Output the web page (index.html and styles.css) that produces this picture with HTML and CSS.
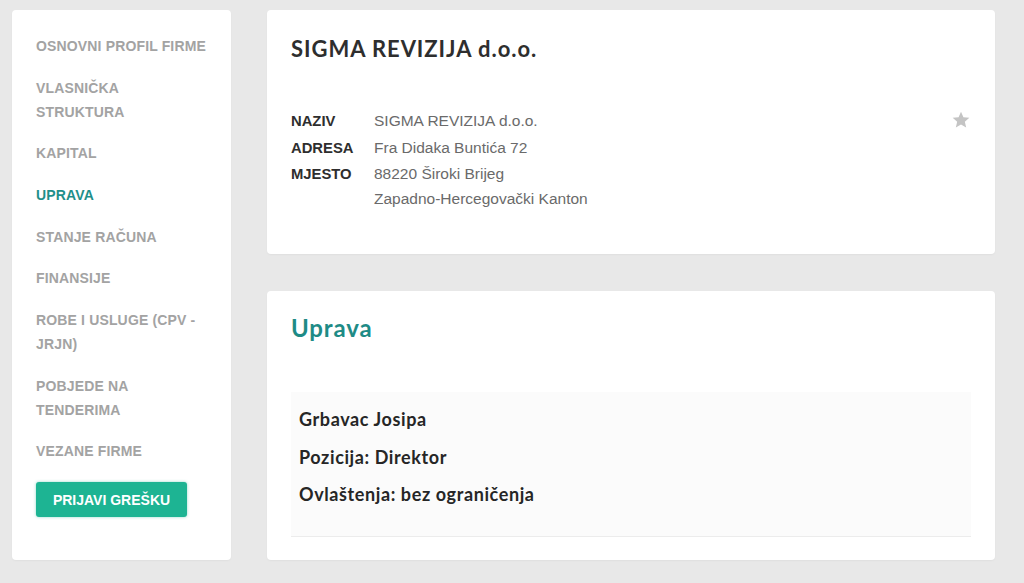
FILE: index.html
```html
<!DOCTYPE html>
<html lang="hr">
<head>
<meta charset="utf-8">
<title>SIGMA REVIZIJA d.o.o.</title>
<link rel="stylesheet" href="styles.css">
</head>
<body>
<div class="page">
  <aside class="sidebar">
    <nav class="menu">
      <a class="menu-item">OSNOVNI PROFIL FIRME</a>
      <a class="menu-item">VLASNIČKA STRUKTURA</a>
      <a class="menu-item">KAPITAL</a>
      <a class="menu-item active">UPRAVA</a>
      <a class="menu-item">STANJE RAČUNA</a>
      <a class="menu-item">FINANSIJE</a>
      <a class="menu-item">ROBE I USLUGE (CPV - JRJN)</a>
      <a class="menu-item">POBJEDE NA TENDERIMA</a>
      <a class="menu-item">VEZANE FIRME</a>
    </nav>
    <button class="report-btn">PRIJAVI GREŠKU</button>
  </aside>
  <main class="main">
    <section class="card profile">
      <h1 class="company-title">SIGMA REVIZIJA d.o.o.</h1>
      <div class="info-row">
        <dl class="info">
          <dt>NAZIV</dt><dd>SIGMA REVIZIJA d.o.o.</dd>
          <dt>ADRESA</dt><dd>Fra Didaka Buntića 72</dd>
          <dt>MJESTO</dt><dd>88220 Široki Brijeg<br>Zapadno-Hercegovački Kanton</dd>
        </dl>
        <svg class="star" viewBox="0 0 24 24" width="20" height="20" aria-hidden="true">
          <path d="M12 2.2l2.9 6.6 7.1.6-5.4 4.7 1.6 7-6.2-3.7-6.2 3.7 1.6-7L2 9.4l7.1-.6z" fill="#c4c4c4"/>
        </svg>
      </div>
    </section>
    <section class="card management">
      <h2 class="section-title">Uprava</h2>
      <div class="person">
        <p>Grbavac Josipa</p>
        <p>Pozicija: Direktor</p>
        <p>Ovlaštenja: bez ograničenja</p>
      </div>
    </section>
  </main>
</div>
</body>
</html>
```

FILE: styles.css
```css
* { box-sizing: border-box; }
html, body { margin: 0; padding: 0; }
body {
  background: #e8e8e8;
  font-family: "Liberation Sans", Arial, sans-serif;
  width: 1024px;
  height: 583px;
  overflow: hidden;
}
.page {
  display: flex;
  align-items: flex-start;
  gap: 36px;
  padding: 10px 29px 0 12px;
}
.sidebar {
  width: 219px;
  height: 550px;
  background: #fff;
  border-radius: 4px;
  padding: 15px 24px 0 24px;
  box-shadow: 0 1px 2px rgba(0,0,0,0.04);
}
.menu {
  display: flex;
  flex-direction: column;
}
.menu-item {
  display: block;
  font-size: 14px;
  font-weight: 700;
  line-height: 24px;
  color: #a3a3a3;
  padding: 8.85px 0;
  letter-spacing: 0.15px;
}
.menu-item.active { color: #1f8f8a; }
.report-btn {
  margin-top: 10px;
  width: 151px;
  height: 35px;
  border: 0;
  border-radius: 3px;
  background: #1db493;
  color: #fff;
  font-family: "Liberation Sans", Arial, sans-serif;
  font-weight: 700;
  font-size: 14px;
  padding: 0;
  box-shadow: 0 0 3px rgba(29,180,147,0.5);
}
.main {
  flex: 1;
  display: flex;
  flex-direction: column;
  gap: 37px;
}
.card {
  background: #fff;
  border-radius: 4px;
  box-shadow: 0 1px 2px rgba(0,0,0,0.04);
}
.profile {
  height: 244px;
  padding: 24px 24px 0 24px;
}
.company-title {
  margin: 0;
  font-family: "Lato", sans-serif;
  font-weight: 700;
  font-size: 22px;
  line-height: 30px;
  color: #2e2e2e;
  letter-spacing: 0.95px;
}
.info-row {
  display: flex;
  justify-content: space-between;
  align-items: flex-start;
  margin-top: 45px;
}
.info {
  display: grid;
  grid-template-columns: 83px auto;
  row-gap: 2px;
  margin: 0;
  line-height: 24.5px;
}
.info dt {
  font-weight: 700;
  color: #2e2e2e;
  font-size: 14.8px;
}
.info dd {
  margin: 0;
  color: #6a6a6a;
  font-size: 15.5px;
}
.star { margin-top: 1px; margin-right: 0; }
.management {
  height: 269px;
  padding: 22px 24px 0 24px;
}
.section-title {
  margin: 0;
  font-family: "Lato", sans-serif;
  font-weight: 700;
  font-size: 24px;
  line-height: 30px;
  color: #1e8b86;
  letter-spacing: 0.9px;
}
.person {
  margin-top: 49px;
  background: #fbfbfb;
  border-bottom: 1px solid #ececec;
  padding: 9px 8px 22px 8px;
}
.person p {
  margin: 0;
  font-family: "Lato", sans-serif;
  font-weight: 700;
  font-size: 18px;
  line-height: 37.5px;
  color: #262626;
  letter-spacing: 0.6px;
}
```
